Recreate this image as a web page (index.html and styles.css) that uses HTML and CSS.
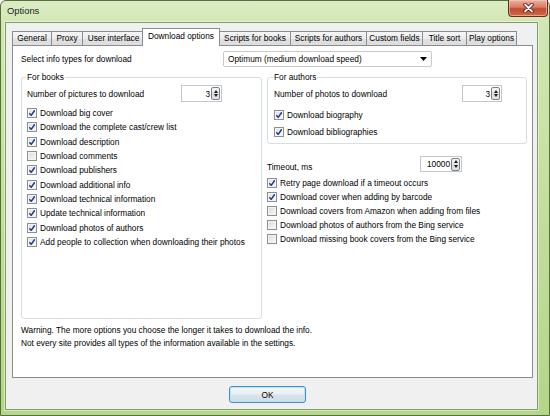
FILE: index.html
```html
<!DOCTYPE html>
<html>
<head>
<meta charset="utf-8">
<title>Options</title>
<link rel="stylesheet" href="styles.css">
</head>
<body>
<div class="window">
  <div class="titlebar">
    <span class="title">Options</span>
    <div class="close">
      <svg width="11" height="10" viewBox="0 0 11 10">
        <path d="M2 1.5 L9 8.5 M9 1.5 L2 8.5" stroke="#5a1a10" stroke-width="3.6" stroke-linecap="round"/>
        <path d="M2 1.5 L9 8.5 M9 1.5 L2 8.5" stroke="#ffffff" stroke-width="1.8" stroke-linecap="round"/>
      </svg>
    </div>
  </div>
  <div class="client">
    <div class="tabs">
      <div class="tab t-general">General</div>
      <div class="tab t-proxy">Proxy</div>
      <div class="tab t-ui">User interface</div>
      <div class="tab t-download active">Download options</div>
      <div class="tab t-sbooks">Scripts for books</div>
      <div class="tab t-sauthors">Scripts for authors</div>
      <div class="tab t-custom">Custom fields</div>
      <div class="tab t-title">Title sort</div>
      <div class="tab t-play">Play options</div>
    </div>
    <div class="panel">
      <div class="select-row">
        <span>Select info types for download</span>
        <div class="combo">
          <span>Optimum (medium download speed)</span>
          <svg class="combo-arrow" width="7" height="4" viewBox="0 0 7 4"><path d="M0 0 H7 L3.5 4 Z" fill="#000"/></svg>
        </div>
      </div>
      <div class="columns">
        <fieldset class="group books">
          <legend>For books</legend>
          <div class="num-row">
            <span>Number of pictures to download</span>
            <div class="spin"><span class="val">3</span><span class="updown"><i class="up"></i><i class="down"></i></span></div>
          </div>
          <div class="checks books-checks">
            <div class="check on"><span class="box"></span>Download big cover</div>
            <div class="check on"><span class="box"></span>Download the complete cast/crew list</div>
            <div class="check on"><span class="box"></span>Download description</div>
            <div class="check"><span class="box"></span>Download comments</div>
            <div class="check on"><span class="box"></span>Download publishers</div>
            <div class="check on"><span class="box"></span>Download additional info</div>
            <div class="check on"><span class="box"></span>Download technical information</div>
            <div class="check on"><span class="box"></span>Update technical information</div>
            <div class="check on"><span class="box"></span>Download photos of authors</div>
            <div class="check on"><span class="box"></span>Add people to collection when downloading their photos</div>
          </div>
        </fieldset>
        <div class="right-col">
          <fieldset class="group authors">
            <legend>For authors</legend>
            <div class="num-row">
              <span>Number of photos to download</span>
              <div class="spin spin-authors"><span class="val">3</span><span class="updown"><i class="up"></i><i class="down"></i></span></div>
            </div>
            <div class="checks authors-checks">
              <div class="check on"><span class="box"></span>Download biography</div>
              <div class="check on"><span class="box"></span>Download bibliographies</div>
            </div>
          </fieldset>
          <div class="timeout-row">
            <span class="timeout-label">Timeout, ms</span>
            <div class="spin spin-timeout"><span class="val">10000</span><span class="updown"><i class="up"></i><i class="down"></i></span></div>
          </div>
          <div class="checks right-checks">
            <div class="check on"><span class="box"></span>Retry page download if a timeout occurs</div>
            <div class="check on"><span class="box"></span>Download cover when adding by barcode</div>
            <div class="check"><span class="box"></span>Download covers from Amazon when adding from files</div>
            <div class="check"><span class="box"></span>Download photos of authors from the Bing service</div>
            <div class="check"><span class="box"></span>Download missing book covers from the Bing service</div>
          </div>
        </div>
      </div>
      <p class="warning">Warning. The more options you choose the longer it takes to download the info.<br>Not every site provides all types of the information available in the settings.</p>
    </div>
    <div class="footer">
      <button class="ok">OK</button>
    </div>
  </div>
</div>
</body>
</html>
```

FILE: styles.css
```css
* { box-sizing: border-box; }

html, body {
  margin: 0;
  padding: 0;
}

body {
  width: 550px;
  height: 416px;
  overflow: hidden;
  font-family: "Liberation Sans", Arial, sans-serif;
  font-size: 8.3px;
  color: #000;
  background: #ffffff;
}

.window {
  width: 550px;
  height: 416px;
  border: 1px solid #566f3c;
  border-radius: 6px 6px 0 0;
  background: linear-gradient(180deg, #dcedc6 0px, #d2e7b4 22px, #c3df9c 200px, #b3d689 416px);
  display: flex;
  flex-direction: column;
}

.titlebar {
  height: 21px;
  flex: none;
  display: flex;
  align-items: flex-start;
}

.title {
  margin: 4px 0 0 6px;
  font-size: 9.4px;
  line-height: 12px;
  color: #1c1c1c;
}

.close {
  margin: -1px 1px 0 auto;
  width: 40px;
  height: 17px;
  border: 1px solid #6d2a1c;
  border-top: none;
  border-radius: 0 0 4px 4px;
  background: linear-gradient(180deg, #e9b2a3 0%, #d87b64 45%, #c24a30 55%, #cf6a4c 100%);
  box-shadow: inset 0 0 0 1px rgba(255, 210, 190, 0.55);
  display: flex;
  align-items: center;
  justify-content: center;
}

.client {
  flex: 1;
  margin: 0 11px 5px 4px;
  border: 1px solid #829f62;
  background: #f0f0f0;
  display: flex;
  flex-direction: column;
  box-shadow: 0 0 0 1px rgba(255, 255, 255, 0.45);
}

/* Tabs */
.tabs {
  height: 22px;
  flex: none;
  display: flex;
  align-items: flex-end;
  padding-left: 6px;
}

.tab {
  height: 14px;
  line-height: 13px;
  padding: 0;
  text-align: center;
  border: 1px solid #898c95;
  border-bottom: none;
  margin-right: -1px;
  background: linear-gradient(180deg, #f5f5f5 0%, #ececec 50%, #e0e0e0 51%, #dddddd 100%);
  white-space: nowrap;
  color: #000;
  flex: none;
}

.t-general { width: 40px; }
.t-proxy { width: 32px; }
.t-ui { width: 63px; }
.t-download { width: 78px; }
.t-sbooks { width: 72px; }
.t-sauthors { width: 77px; }
.t-custom { width: 57px; }
.t-title { width: 45px; }
.t-play { width: 51px; }

.tab.active {
  position: relative;
  z-index: 1;
  height: 18px;
  line-height: 15px;
  margin: 0 -1px -1px -2px;
  background: #ffffff;
}

/* Panel */
.panel {
  flex: 1;
  margin: 0 4px 0 6px;
  border: 1px solid #898c95;
  background: #ffffff;
  padding: 5px 5px 0 8px;
  display: flex;
  flex-direction: column;
}

.select-row {
  display: grid;
  grid-template-columns: 202px 209px;
  align-items: center;
  height: 16px;
}

.combo {
  height: 16px;
  border: 1px solid #c9c9c9;
  border-radius: 2px;
  background: #ffffff;
  display: flex;
  align-items: center;
  padding: 0 3px 0 4px;
}

.combo span {
  flex: 1;
}

.combo-arrow {
  margin-right: 1px;
}

.columns {
  margin-top: 5px;
  height: 247px;
  display: flex;
  gap: 5px;
}

.group {
  margin: 0;
  min-width: 0;
  border: 1px solid #d5dfe5;
  border-radius: 3px;
}

.group legend {
  padding: 0 1px;
  margin-left: -1px;
  line-height: 10px;
  color: #000;
}

.books {
  width: 241px;
  padding: 3px 5px 0 5px;
}

.right-col {
  width: 260px;
  display: flex;
  flex-direction: column;
}

.authors {
  width: 260px;
  padding: 3px 24px 3px 6px;
}

.num-row {
  display: flex;
  align-items: center;
  height: 17px;
}

.num-row .spin {
  margin-left: auto;
}

.books .num-row {
  padding-right: 34px;
}

.spin {
  width: 41px;
  height: 17px;
  border: 1px solid #c3c6cc;
  background: #ffffff;
  display: flex;
  align-items: center;
  padding: 0 1px 0 2px;
}

.spin-authors {
  width: 40px;
}

.spin-timeout {
  width: 42px;
}

.spin .val {
  flex: 1;
  text-align: right;
  padding-right: 1px;
}

.updown {
  width: 9px;
  height: 13px;
  border: 1px solid #7d7f83;
  border-radius: 2px;
  background: linear-gradient(180deg, #f6f6f6 0%, #e2e2e2 50%, #d6d6d6 51%, #e6e6e6 100%);
  display: flex;
  flex-direction: column;
  align-items: center;
  justify-content: space-around;
  padding: 1px 0;
}

.updown i {
  display: block;
  width: 0;
  height: 0;
  border-left: 2.5px solid transparent;
  border-right: 2.5px solid transparent;
}

.updown .up {
  border-bottom: 3px solid #1e1e1e;
}

.updown .down {
  border-top: 3px solid #1e1e1e;
}

/* Checkboxes */
.checks {
  display: flex;
  flex-direction: column;
}

.check {
  display: flex;
  align-items: center;
  gap: 3px;
  white-space: nowrap;
}

.books-checks {
  margin-top: 4px;
}

.books-checks .check {
  height: 14.3px;
}

.authors-checks {
  margin-top: 4px;
}

.authors-checks .check {
  height: 17px;
}

.right-checks {
  margin-top: 4px;
}

.right-checks .check {
  height: 14px;
}

.box {
  width: 10px;
  height: 10px;
  flex: none;
  border: 1px solid #8e8f8f;
  background: linear-gradient(135deg, #d6d6d6 0%, #ececec 55%, #fbfbfb 100%);
  box-shadow: inset 0 0 0 1px #f4f4f4;
}

.check.on .box {
  background-color: #f6f6f6;
  background-image: url("data:image/svg+xml,%3Csvg xmlns='http://www.w3.org/2000/svg' width='8' height='8' viewBox='0 0 8 8'%3E%3Cpath d='M1.3 4.2 L3.2 6.4 L6.8 1.2' fill='none' stroke='%231c3a8e' stroke-width='1.5'/%3E%3C/svg%3E"), linear-gradient(135deg, #dedede 0%, #f0f0f0 55%, #fbfbfb 100%);
  background-repeat: no-repeat;
  background-position: center;
}

.timeout-row {
  margin-top: 12px;
  height: 16px;
  display: flex;
  align-items: center;
  justify-content: space-between;
  padding-right: 65px;
}

.timeout-label {
  padding-top: 5px;
}

.timeout-row .spin {
  height: 16px;
}

.warning {
  margin: 4.5px 0 0 0;
  line-height: 13px;
}

/* Footer */
.footer {
  flex: none;
  height: 31px;
  display: flex;
  justify-content: center;
  padding: 8px 8px 0 0;
}

.ok {
  width: 77px;
  height: 17px;
  padding: 0;
  font-family: inherit;
  font-size: 8.3px;
  color: #000;
  border: 1px solid #3d8ec9;
  border-radius: 3px;
  background: linear-gradient(180deg, #f2f6f9 0%, #e9eff3 48%, #dae4eb 52%, #cfdde7 100%);
  box-shadow: inset 0 0 0 1px #bfe3f6;
}
```
